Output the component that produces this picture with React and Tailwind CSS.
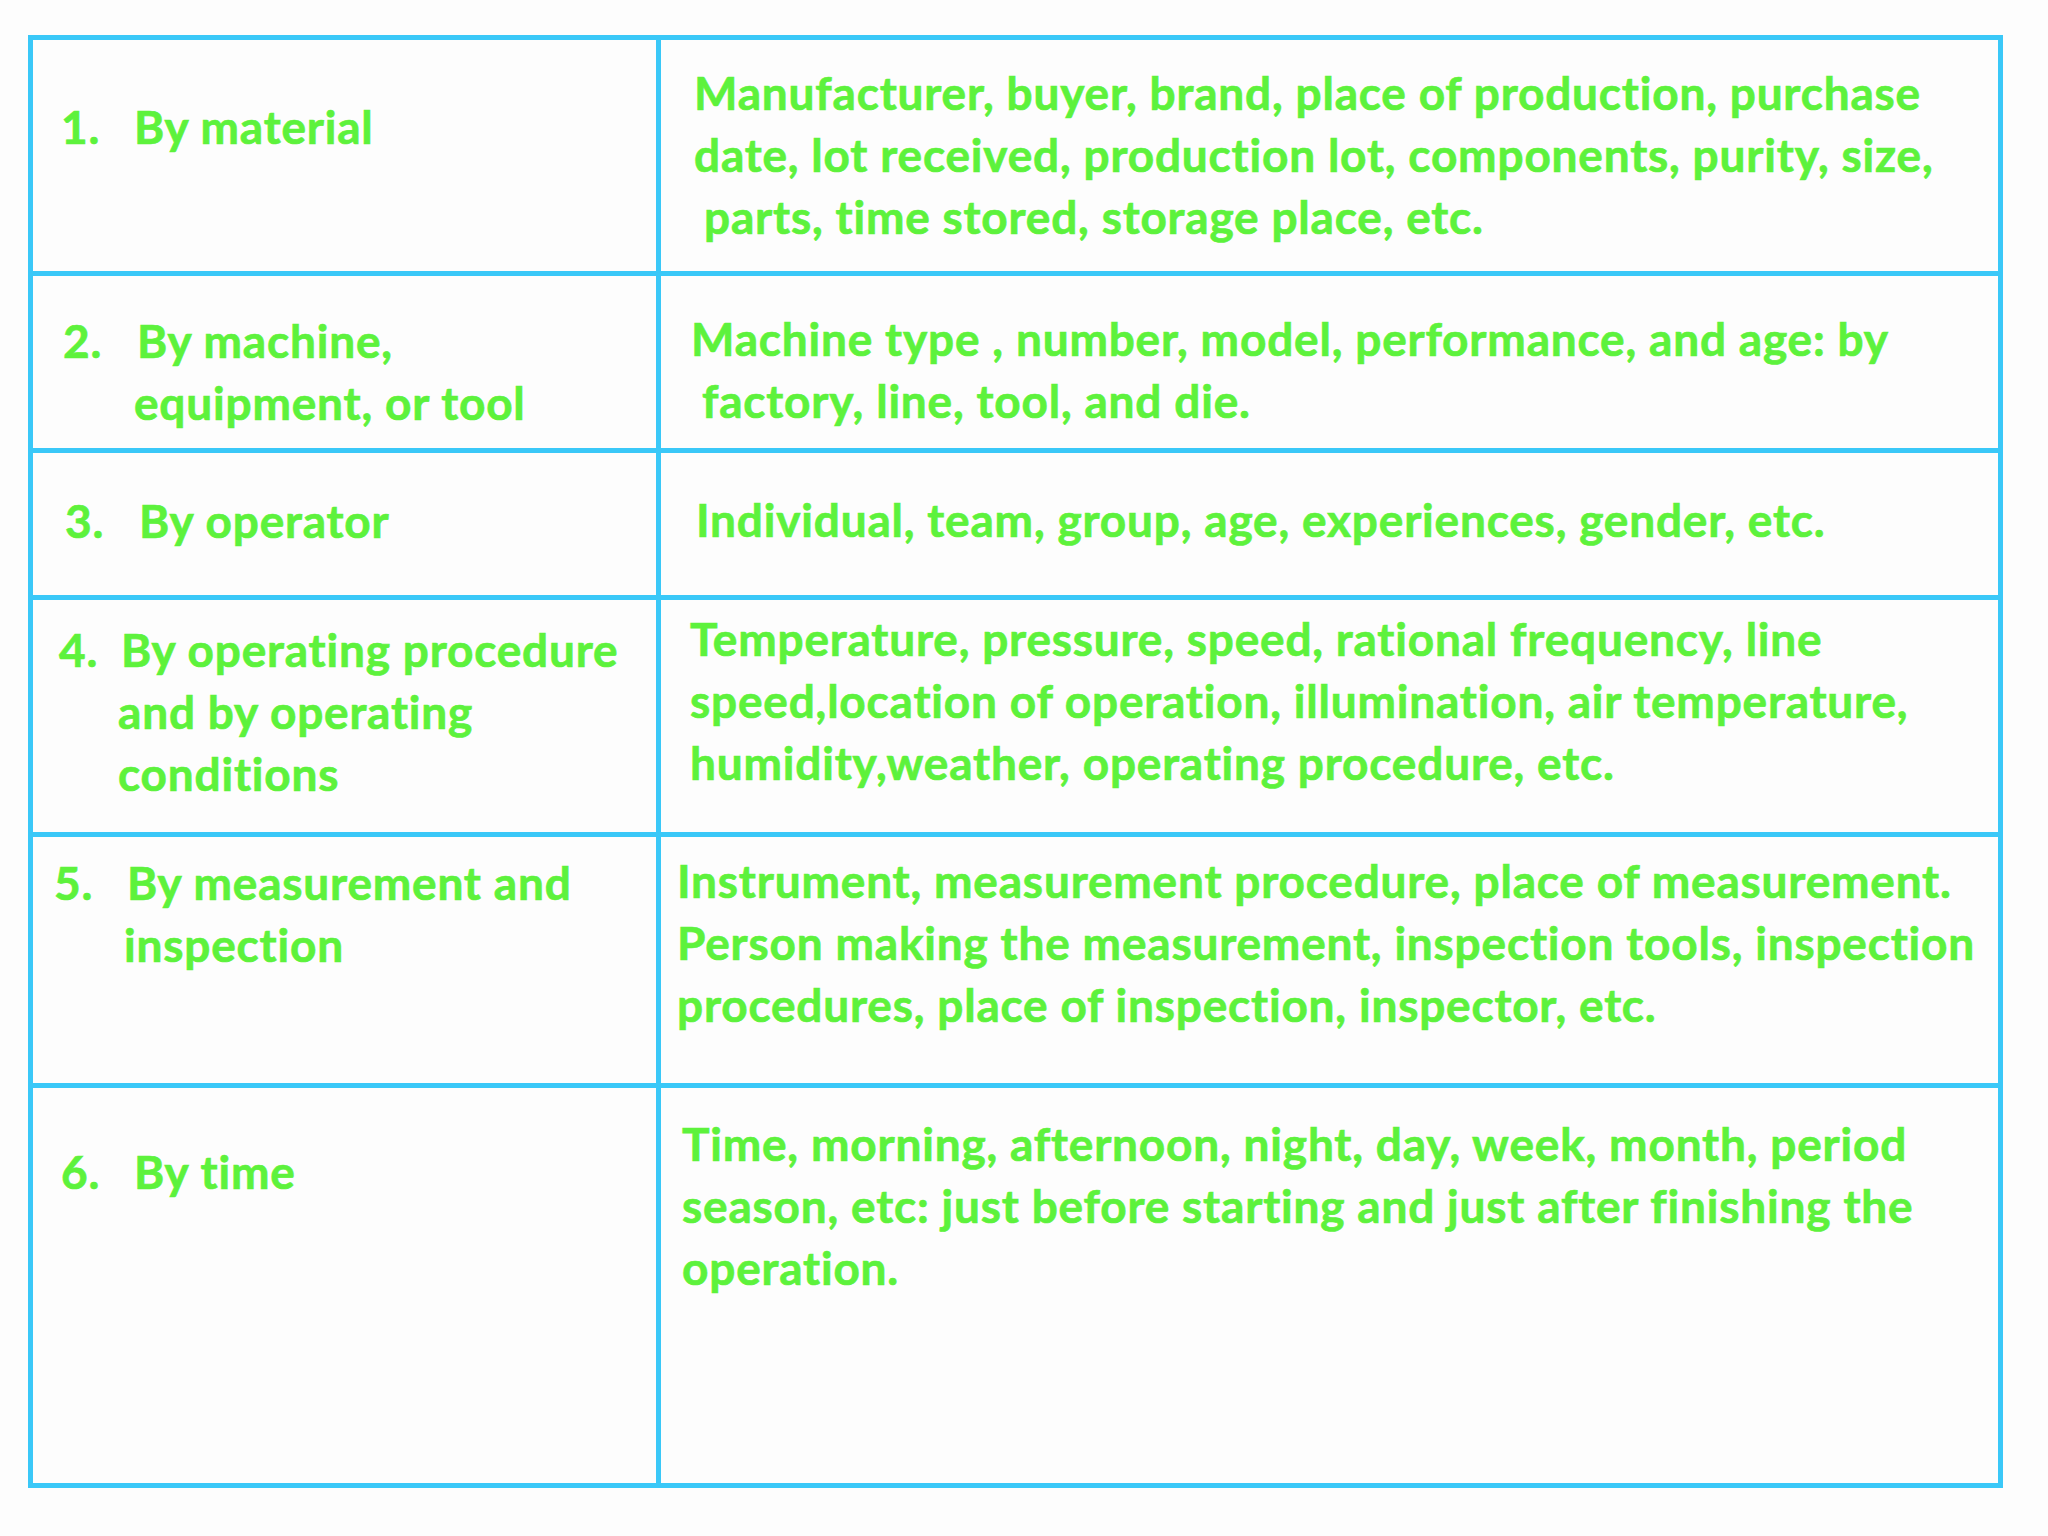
const rows = [
  {
    h: 'h-[236px]',
    num: '1.',
    numW: 'w-[73px]',
    leftPad: 'pt-[56px] pl-[28px]',
    left: ['By material'],
    leftIndent: [],
    rightPad: 'pt-[22px] pl-[33px]',
    right: [
      'Manufacturer, buyer, brand, place of production, purchase',
      'date, lot received, production lot, components, purity, size,',
      'parts, time stored, storage place, etc.',
    ],
    rightIndent: ['', '', 'pl-[10px]'],
  },
  {
    h: 'h-[177px]',
    num: '2.',
    numW: 'w-[74px]',
    leftPad: 'pt-[34px] pl-[30px]',
    left: ['By machine,', 'equipment, or tool'],
    leftIndent: ['', '-ml-[3px]'],
    rightPad: 'pt-[32px] pl-[30px]',
    right: ['Machine type , number, model, performance, and age: by', 'factory, line, tool, and die.'],
    rightIndent: ['', 'pl-[11px]'],
  },
  {
    h: 'h-[147px]',
    num: '3.',
    numW: 'w-[74px]',
    leftPad: 'pt-[37px] pl-[32px]',
    left: ['By operator'],
    leftIndent: [],
    rightPad: 'pt-[36px] pl-[35px]',
    right: ['Individual, team, group, age, experiences, gender, etc.'],
    rightIndent: [],
  },
  {
    h: 'h-[237px]',
    num: '4.',
    numW: 'w-[62px]',
    leftPad: 'pt-[19px] pl-[26px]',
    left: ['By operating procedure', 'and by operating', 'conditions'],
    leftIndent: ['', '-ml-[3px]', '-ml-[3px]'],
    rightPad: 'pt-[8px] pl-[29px]',
    right: [
      'Temperature, pressure, speed, rational frequency, line',
      'speed,location of operation, illumination, air temperature,',
      'humidity,weather, operating procedure, etc.',
    ],
    rightIndent: [],
  },
  {
    h: 'h-[251px]',
    num: '5.',
    numW: 'w-[73px]',
    leftPad: 'pt-[15px] pl-[21px]',
    left: ['By measurement and', 'inspection'],
    leftIndent: ['', '-ml-[3px]'],
    rightPad: 'pt-[13px] pl-[16px]',
    right: [
      'Instrument, measurement procedure, place of measurement.',
      'Person making the measurement, inspection tools, inspection',
      'procedures, place of inspection, inspector, etc.',
    ],
    rightIndent: [],
  },
  {
    h: 'h-[400px]',
    num: '6.',
    numW: 'w-[73px]',
    leftPad: 'pt-[53px] pl-[28px]',
    left: ['By time'],
    leftIndent: [],
    rightPad: 'pt-[25px] pl-[21px]',
    right: [
      'Time, morning, afternoon, night, day, week, month, period',
      'season, etc: just before starting and just after finishing the',
      'operation.',
    ],
    rightIndent: [],
  },
];

export default function App() {
  return (
    <div className="min-h-[1536px] w-[2048px] bg-[#fdfdfd] pl-[28px] pt-[35px] font-['Lato',sans-serif] text-[46px] font-bold leading-[62px] tracking-[0.8px] text-[#5df23c] [-webkit-text-stroke:0.7px_#5df23c]">
      <div className="w-[1975px] border-t-[5px] border-l-[5px] border-r-[5px] border-[#3ac8f8]">
        {rows.map((r) => (
          <div key={r.num} className={`grid grid-cols-[628px_1fr] border-b-[5px] border-[#3ac8f8] ${r.h}`}>
            <div className={`flex border-r-[5px] border-[#3ac8f8] ${r.leftPad}`}>
              <span className={`shrink-0 ${r.numW}`}>{r.num}</span>
              <div>
                {r.left.map((line, i) => (
                  <div key={line} className={`whitespace-nowrap ${r.leftIndent[i] || ''}`}>
                    {line}
                  </div>
                ))}
              </div>
            </div>
            <div className={r.rightPad}>
              {r.right.map((line, i) => (
                <div key={line} className={`whitespace-nowrap ${r.rightIndent[i] || ''}`}>
                  {line}
                </div>
              ))}
            </div>
          </div>
        ))}
      </div>
    </div>
  );
}
